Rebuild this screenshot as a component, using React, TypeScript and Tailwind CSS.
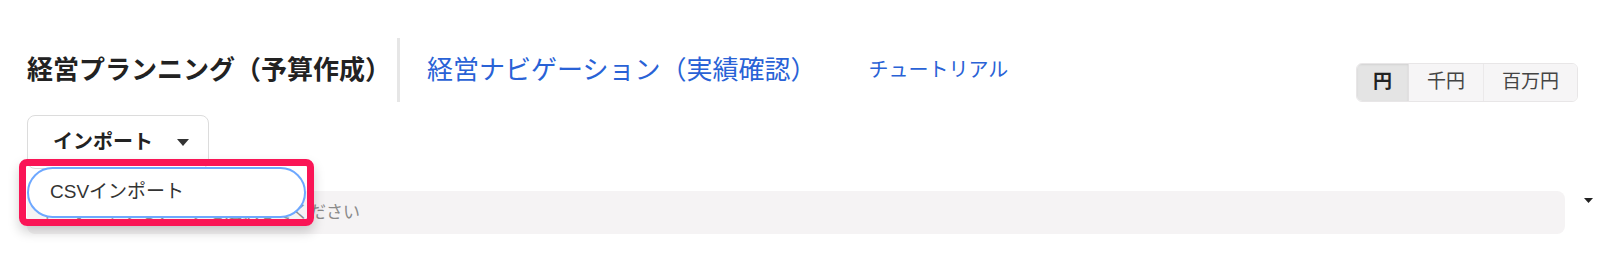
import { useState } from 'react';

const units = ['円', '千円', '百万円'];

function Caret({ className }: { className?: string }) {
  return (
    <svg width="12" height="7" viewBox="0 0 12 7" className={className}>
      <path d="M0 0h12L6 7z" fill="currentColor" />
    </svg>
  );
}

export default function App() {
  const [unit, setUnit] = useState('円');

  return (
    <div className="relative h-[255px] w-[1600px] overflow-hidden bg-white font-['Liberation_Sans','Noto_Sans_CJK_JP',sans-serif] text-[#222]">
      {/* ヘッダー */}
      <div className="flex items-end justify-between pl-[27px] pr-[22px] pt-[38px]">
        <div className="flex items-center">
          <h1 className="border-r-[3px] border-[#e6e6e6] pr-[6px] text-[26px] font-bold leading-[64px]">
            経営プランニング（予算作成）
          </h1>
          <a className="ml-[27px] text-[26px] leading-[64px] text-[#2962d6]">経営ナビゲーション（実績確認）</a>
          <a className="ml-[52px] text-[20px] leading-[64px] text-[#2962d6]">チュートリアル</a>
        </div>
        <div className="flex h-[39px] overflow-hidden rounded-[6px] border border-[#e8e6e7] text-[19px]">
          {units.map((u) => (
            <button
              key={u}
              onClick={() => setUnit(u)}
              className={
                unit === u
                  ? 'border-r border-[#e2e0e1] bg-[#e4e4e4] px-[16px] font-bold text-[#222] shadow-[inset_0_1px_2px_rgba(0,0,0,0.08)]'
                  : 'border-r border-[#ebe9ea] bg-[#f6f5f6] px-[18px] text-[#444] last:border-r-0'
              }
            >
              {u}
            </button>
          ))}
        </div>
      </div>

      {/* インポート */}
      <div className="mt-[13px] pl-[27px]">
        <button className="flex h-[54px] w-[182px] items-center rounded-[8px] border border-[#dcdcdc] bg-white pl-[25px] text-[20px] font-bold">
          インポート
          <Caret className="ml-[24px] text-[#333]" />
        </button>
      </div>

      {/* 入力欄 */}
      <div className="mt-[22px] flex items-center pl-[27px]">
        <div className="flex h-[43px] w-[1538px] items-center rounded-[8px] bg-[#f5f3f4] pl-[11px] text-[17px] text-[#8a8a8a]">
          インポートするデータを選択してください
        </div>
        <svg width="9" height="5" viewBox="0 0 9 5" className="ml-[19px] -mt-[24px] text-[#222]">
          <path d="M0 0h9L4.5 5z" fill="currentColor" />
        </svg>
      </div>

      {/* ドロップダウン */}
      <div className="absolute left-[19px] top-[159px] rounded-[8px] border-[7px] border-[#fa1556] p-px shadow-[0_6px_12px_rgba(0,0,0,0.18)]">
        <div className="flex h-[51px] w-[279px] items-center rounded-full border-2 border-[#6ea8ff] bg-white pl-[21px] text-[19px] text-[#333]">
          CSVインポート
        </div>
      </div>
    </div>
  );
}
